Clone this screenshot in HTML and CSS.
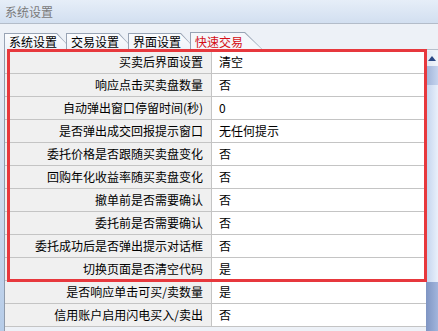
FILE: index.html
```html
<!DOCTYPE html>
<html>
<head>
<meta charset="utf-8">
<link rel="stylesheet" href="styles.css">
</head>
<body>
<div class="titlebar">系统设置</div>
<div class="tabstrip">
  <div class="tab"><div class="tab-in">系统设置</div></div>
  <div class="tab"><div class="tab-in">交易设置</div></div>
  <div class="tab"><div class="tab-in">界面设置</div></div>
  <div class="tab active"><div class="tab-in">快速交易</div></div>
  <div class="tabline"></div>
</div>
<div class="main">
  <div class="frame"></div>
  <div class="grid">
    <div class="group">
      <div class="row"><div class="key">买卖后界面设置</div><div class="val">清空</div></div>
      <div class="row"><div class="key">响应点击买卖盘数量</div><div class="val">否</div></div>
      <div class="row"><div class="key">自动弹出窗口停留时间(秒)</div><div class="val">0</div></div>
      <div class="row"><div class="key">是否弹出成交回报提示窗口</div><div class="val">无任何提示</div></div>
      <div class="row"><div class="key">委托价格是否跟随买卖盘变化</div><div class="val">否</div></div>
      <div class="row"><div class="key">回购年化收益率随买卖盘变化</div><div class="val">否</div></div>
      <div class="row"><div class="key">撤单前是否需要确认</div><div class="val">否</div></div>
      <div class="row"><div class="key">委托前是否需要确认</div><div class="val">否</div></div>
      <div class="row"><div class="key">委托成功后是否弹出提示对话框</div><div class="val">否</div></div>
      <div class="row"><div class="key">切换页面是否清空代码</div><div class="val">是</div></div>
    </div>
    <div class="row"><div class="key">是否响应单击可买/卖数量</div><div class="val">是</div></div>
    <div class="row"><div class="key">信用账户启用闪电买入/卖出</div><div class="val">否</div></div>
  </div>
  <div class="scrollbar">
    <div class="sb-btn"><span class="arrow"></span></div>
    <div class="sb-top"></div>
    <div class="sb-thumb"></div>
    <div class="sb-track"></div>
  </div>
</div>
</body>
</html>
```
FILE: styles.css
```css
html, body {
  margin: 0;
  padding: 0;
  width: 438px;
  height: 331px;
  overflow: hidden;
  background: #edf1f7;
  font-family: "Noto Sans CJK SC", "Liberation Sans", sans-serif;
  font-size: 12px;
  color: #000;
}
.titlebar {
  height: 24px;
  box-sizing: border-box;
  border-bottom: 1px solid #b3bcc9;
  background: linear-gradient(#e6eef8, #d2dff0);
  color: #7a7a7a;
  padding-left: 5px;
  line-height: 23px;
  font-size: 12px;
}
.tabstrip {
  height: 26px;
  display: flex;
  align-items: flex-end;
  padding-left: 4px;
  background: #edf1f7;
}
.tab {
  width: 62px;
  height: 17px;
  background: #98a3b4;
  clip-path: polygon(0 0, calc(100% - 9px) 0, 100% 10px, 100% 100%, 0 100%);
  display: flex;
}
.tab-in {
  flex: 1;
  margin: 1px 0 0 1px;
  background: linear-gradient(#fbfcfe, #eef2f8);
  clip-path: polygon(0 0, calc(100% - 9.5px) 0, 100% 9.5px, 100% 100%, 0 100%);
  padding-left: 4px;
  line-height: 16px;
  white-space: nowrap;
}
.tab.active {
  width: 72px;
  height: 18px;
  clip-path: polygon(0 0, calc(100% - 17px) 0, 100% 17px, 100% 100%, 0 100%);
}
.tab.active .tab-in {
  background: #f5f7fb;
  color: #d40f17;
  clip-path: polygon(0 0, calc(100% - 17.5px) 0, 100% 16.5px, 100% 100%, 0 100%);
  line-height: 17px;
}
.tabline {
  flex: 1;
  height: 1px;
  background: #b7bfcb;
}
.main {
  display: flex;
  height: 281px;
}
.frame {
  width: 4px;
  background: linear-gradient(#e9eef6, #b6cce8);
  border-right: 1px solid #8e9aab;
}
.grid {
  flex: 1;
  display: flex;
  flex-direction: column;
  padding-top: 1px;
}
.group {
  position: relative;
}
.group::after {
  content: "";
  position: absolute;
  left: 2px;
  right: -1px;
  top: -2px;
  bottom: -1px;
  border: 3px solid #e7383d;
  pointer-events: none;
}
.row {
  display: flex;
  height: 23px;
  box-sizing: border-box;
  border-bottom: 1px solid #c4c4c4;
}
.key {
  width: 207px;
  box-sizing: border-box;
  background: #f0f0f0;
  border-right: 1px solid #c4c4c4;
  text-align: right;
  padding-right: 8px;
  line-height: 22px;
  white-space: nowrap;
}
.val {
  flex: 1;
  background: #fff;
  padding-left: 7px;
  line-height: 22px;
  white-space: nowrap;
}
.scrollbar {
  width: 12px;
  display: flex;
  flex-direction: column;
  padding-top: 1px;
}
.sb-btn {
  height: 15px;
  background: linear-gradient(90deg, #dfe7f3, #f1f5fb);
  display: flex;
  justify-content: center;
  align-items: center;
}
.arrow {
  width: 0;
  height: 0;
  border-left: 4px solid transparent;
  border-right: 4px solid transparent;
  border-bottom: 5px solid #2a4785;
}
.sb-top {
  height: 19px;
  background: linear-gradient(90deg, #9fb2d8, #c6d4ee);
}
.sb-thumb {
  height: 197px;
  background: linear-gradient(90deg, #c3d3ee, #e9f0fb);
}
.sb-track {
  flex: 1;
  background: linear-gradient(90deg, #7f95c3, #a2b5dc);
}
```
